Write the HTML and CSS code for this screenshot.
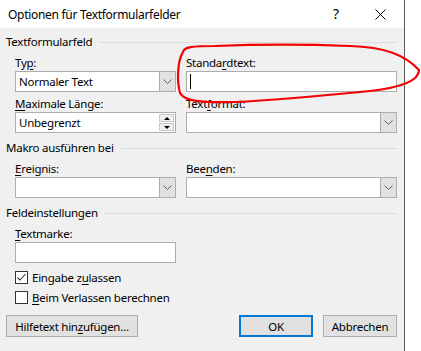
FILE: index.html
```html
<!DOCTYPE html>
<html lang="de">
<head>
<meta charset="utf-8">
<link rel="stylesheet" href="styles.css">
</head>
<body>
<div class="window">
  <div class="titlebar">
    <span class="title">Optionen für Textformularfelder</span>
    <span class="help">?</span>
    <svg class="close" width="11" height="11" viewBox="0 0 11 11"><path d="M0.5 0.5 L10.5 10.5 M10.5 0.5 L0.5 10.5" stroke="#000" stroke-width="1" fill="none"/></svg>
  </div>
  <div class="content">
    <section class="group">
      <div class="ghead"><span>Textformularfeld</span><i class="rule"></i></div>
      <div class="grid">
        <div class="field">
          <label class="lbl">Ty<u>p</u>:</label>
          <div class="combo"><span class="val">Normaler Text</span><span class="drop"><svg width="9" height="5" viewBox="0 0 9 5"><path d="M0.5 0.5 L4.5 4.5 L8.5 0.5" stroke="#606060" fill="none"/></svg></span></div>
        </div>
        <div class="field">
          <label class="lbl">Standa<u>r</u>dtext:</label>
          <div class="textbox"><i class="caret"></i></div>
        </div>
        <div class="field">
          <label class="lbl"><u>M</u>aximale Länge:</label>
          <div class="combo"><span class="val">Unbegrenzt</span><span class="spin"><span class="sb"><i class="up"></i></span><span class="sb"><i class="down"></i></span></span></div>
        </div>
        <div class="field">
          <label class="lbl">Text<u>f</u>ormat:</label>
          <div class="combo"><span class="val"></span><span class="drop"><svg width="9" height="5" viewBox="0 0 9 5"><path d="M0.5 0.5 L4.5 4.5 L8.5 0.5" stroke="#606060" fill="none"/></svg></span></div>
        </div>
      </div>
    </section>
    <section class="group">
      <div class="ghead"><span>Makro ausführen bei</span><i class="rule"></i></div>
      <div class="grid">
        <div class="field">
          <label class="lbl"><u>E</u>reignis:</label>
          <div class="combo"><span class="val"></span><span class="drop"><svg width="9" height="5" viewBox="0 0 9 5"><path d="M0.5 0.5 L4.5 4.5 L8.5 0.5" stroke="#606060" fill="none"/></svg></span></div>
        </div>
        <div class="field">
          <label class="lbl">Bee<u>n</u>den:</label>
          <div class="combo"><span class="val"></span><span class="drop"><svg width="9" height="5" viewBox="0 0 9 5"><path d="M0.5 0.5 L4.5 4.5 L8.5 0.5" stroke="#606060" fill="none"/></svg></span></div>
        </div>
      </div>
    </section>
    <section class="group">
      <div class="ghead"><span>Feldeinstellungen</span><i class="rule"></i></div>
      <div class="grid">
        <div class="field">
          <label class="lbl"><u>T</u>extmarke:</label>
          <div class="textbox"></div>
        </div>
      </div>
      <div class="checks">
        <div class="check"><span class="box"><svg width="11" height="11" viewBox="0 0 11 11"><path d="M1.5 5.5 L4 8 L9.5 2" stroke="#333" stroke-width="1.1" fill="none"/></svg></span><span>Eingabe z<u>u</u>lassen</span></div>
        <div class="check"><span class="box"></span><span><u>B</u>eim Verlassen berechnen</span></div>
      </div>
    </section>
    <div class="buttons">
      <button class="btn wide">Hilfetext hin<u>z</u>ufügen...</button>
      <span class="spacer"></span>
      <button class="btn primary">OK</button>
      <button class="btn">Abbrechen</button>
    </div>
  </div>
</div>
<svg class="annot" width="421" height="351" viewBox="0 0 421 351">
  <path d="M183 52 C 184 47, 192 46, 215 46 C 240 45, 300 44, 350 46 C 385 47, 405 55, 419 70 C 419 80, 405 87, 370 91 C 330 95, 280 100, 235 102 C 200 103, 184 101, 180 93 C 177 82, 177 62, 183 52" stroke="#f40000" stroke-width="2.2" fill="none" stroke-linecap="round"/>
</svg>
</body>
</html>
```

FILE: styles.css
```css
* { box-sizing: border-box; }
html, body { margin: 0; padding: 0; }
body {
  width: 421px;
  height: 351px;
  background: #ffffff;
  font-family: "Noto Sans", "Open Sans", sans-serif;
  font-size: 11.5px;
  letter-spacing: -0.25px;
  color: #000;
  position: relative;
  overflow: hidden;
}
u { text-decoration: underline; text-underline-offset: 2px; }
.window {
  width: 405px;
  height: 351px;
  border-right: 1px solid #5a5a5a;
  display: flex;
  flex-direction: column;
}
.titlebar {
  height: 28px;
  background: #fff;
  display: flex;
  align-items: center;
  padding-left: 8px;
  flex: none;
}
.title { flex: 1; font-size: 12px; letter-spacing: -0.3px; }
.help { font-size: 14px; width: 42px; margin-right: 0; line-height: 14px; }
.close { margin-right: 18px; margin-left: 0; }
.content {
  flex: 1;
  background: #f0f0f0;
  padding: 7px 7px 0 6px;
}
.ghead {
  height: 14px;
  display: flex;
  align-items: center;
  gap: 7px;
}
.ghead span { line-height: 14px; }
.rule { flex: 1; height: 1px; background: #dcdcdc; }
.group { margin-bottom: 8px; }
.grid {
  display: grid;
  grid-template-columns: 161px 211px;
  column-gap: 10px;
  row-gap: 3px;
  padding-left: 9px;
  margin-top: 5px;
}
.field { display: flex; flex-direction: column; }
.lbl { height: 17px; line-height: 17px; }
.combo, .textbox {
  height: 21px;
  background: #fff;
  border: 1px solid #adadad;
  display: flex;
  align-items: stretch;
}
.val { flex: 1; padding-left: 3px; line-height: 19px; }
.drop {
  width: 16px;
  background: #e1e1e1;
  border-left: 1px solid #adadad;
  display: flex;
  align-items: center;
  justify-content: center;
}
.spin {
  width: 16px;
  display: flex;
  flex-direction: column;
  gap: 1px;
  padding: 1px 1px 1px 0;
}
.sb {
  flex: 1;
  background: #f0f0f0;
  border: 1px solid #c8c8c8;
  display: flex;
  align-items: center;
  justify-content: center;
}
.up { width: 0; height: 0; border-left: 3px solid transparent; border-right: 3px solid transparent; border-bottom: 3px solid #000; }
.down { width: 0; height: 0; border-left: 3px solid transparent; border-right: 3px solid transparent; border-top: 3px solid #000; }
.textbox { padding-left: 3px; align-items: center; }
.caret { width: 1px; height: 15px; background: #000; }
.checks { padding-left: 9px; margin-top: 4px; }
.check { height: 20px; display: flex; align-items: center; gap: 4px; }
.box {
  width: 13px; height: 13px;
  border: 1px solid #333;
  background: #fff;
  display: flex;
  align-items: center;
  justify-content: center;
}
.buttons {
  display: flex;
  align-items: center;
  gap: 10px;
  margin-top: 6px;
}
.spacer { flex: 1; }
.btn {
  height: 22px;
  width: 74px;
  background: #e1e1e1;
  border: 1px solid #adadad;
  font-family: inherit;
  font-size: 11.5px;
  letter-spacing: -0.25px;
  color: #000;
  padding: 0;
  margin: 0;
}
.btn.wide { width: 132px; }
.btn.primary { border: 2px solid #0078d7; }
.annot { position: absolute; left: 0; top: 0; pointer-events: none; }
```
